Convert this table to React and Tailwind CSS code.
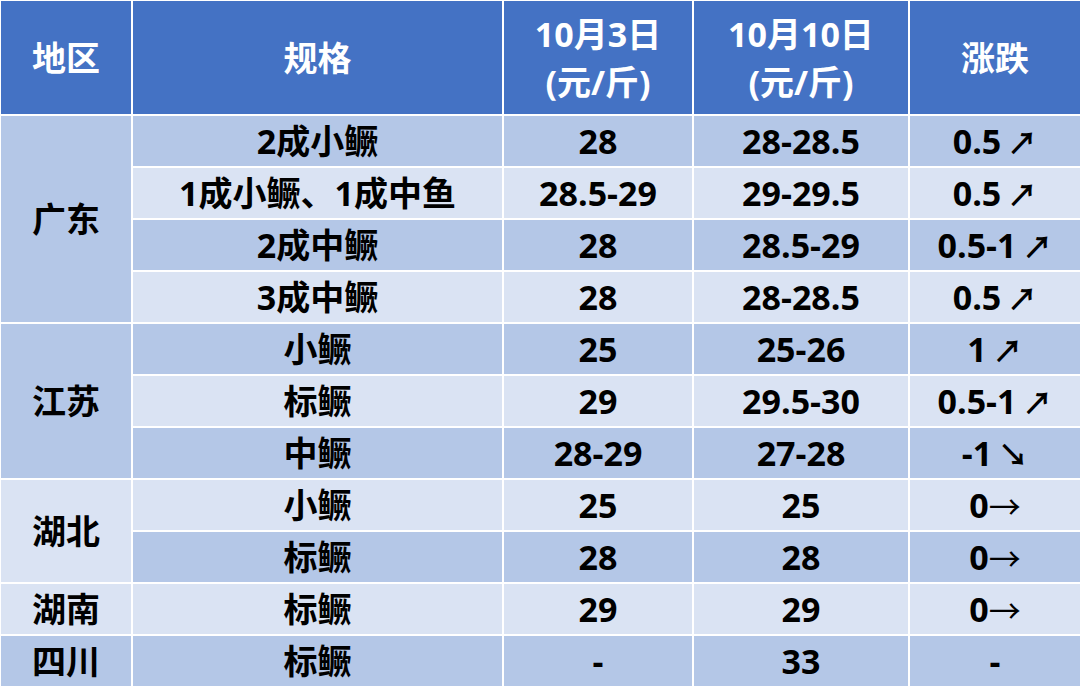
import React from "react";

const D = "bg-[#b4c7e7]";
const L = "bg-[#dae3f3]";

const rows = [
  ["2成小鳜", "28", "28-28.5", "0.5", "↗"],
  ["1成小鳜、1成中鱼", "28.5-29", "29-29.5", "0.5", "↗"],
  ["2成中鳜", "28", "28.5-29", "0.5-1", "↗"],
  ["3成中鳜", "28", "28-28.5", "0.5", "↗"],
  ["小鳜", "25", "25-26", "1", "↗"],
  ["标鳜", "29", "29.5-30", "0.5-1", "↗"],
  ["中鳜", "28-29", "27-28", "-1", "↘"],
  ["小鳜", "25", "25", "0", "→"],
  ["标鳜", "28", "28", "0", "→"],
  ["标鳜", "29", "29", "0", "→"],
  ["标鳜", "-", "33", "-", ""],
];

const regions = [
  { name: "广东", span: "row-span-4", bg: D },
  { name: "江苏", span: "row-span-3", bg: D },
  { name: "湖北", span: "row-span-2", bg: L },
  { name: "湖南", span: "row-span-1", bg: L },
  { name: "四川", span: "row-span-1", bg: D },
];
const regionStart = { 0: 0, 4: 1, 7: 2, 9: 3, 10: 4 };

const cell = "flex items-center justify-center";
const cjk = { fontFamily: '"Noto Sans CJK SC", sans-serif' };

function Change({ v, a }) {
  if (a === "→") {
    return (
      <span className="flex items-center">
        <span>{v}</span>
        <span className="text-[32px] font-normal" style={cjk}>→</span>
      </span>
    );
  }
  if (!a) return <span>{v}</span>;
  return (
    <span className="flex items-center gap-[6px]">
      <span>{v}</span>
      <span className="text-[30px] font-bold" style={cjk}>{a}</span>
    </span>
  );
}

export default function App() {
  return (
    <div
      className="w-[1080px] h-[689px] bg-white pl-[1px] pt-[1px] overflow-hidden"
      style={{ fontFamily: '"Open Sans", "Noto Sans CJK SC", sans-serif' }}
    >
      <div className="grid grid-cols-[130px_369px_188px_214px_170px] grid-rows-[113px_repeat(11,50px)] gap-[2px] text-[34px] font-bold text-black leading-none">
        <div className={`${cell} bg-[#4472c4] text-white`}>地区</div>
        <div className={`${cell} bg-[#4472c4] text-white`}>规格</div>
        <div className={`${cell} flex-col gap-[14px] bg-[#4472c4] text-white`}>
          <span>10月3日</span>
          <span>(元/斤)</span>
        </div>
        <div className={`${cell} flex-col gap-[14px] bg-[#4472c4] text-white`}>
          <span>10月10日</span>
          <span>(元/斤)</span>
        </div>
        <div className={`${cell} bg-[#4472c4] text-white`}>涨跌</div>
        {rows.map((r, i) => {
          const bg = i % 2 === 0 ? D : L;
          const ri = regionStart[i];
          return (
            <React.Fragment key={i}>
              {ri !== undefined && (
                <div className={`${cell} col-start-1 ${regions[ri].span} ${regions[ri].bg}`}>
                  {regions[ri].name}
                </div>
              )}
              <div className={`${cell} col-start-2 ${bg}`}>{r[0]}</div>
              <div className={`${cell} ${bg}`}>{r[1]}</div>
              <div className={`${cell} ${bg}`}>{r[2]}</div>
              <div className={`${cell} ${bg}`}>
                <Change v={r[3]} a={r[4]} />
              </div>
            </React.Fragment>
          );
        })}
      </div>
    </div>
  );
}
